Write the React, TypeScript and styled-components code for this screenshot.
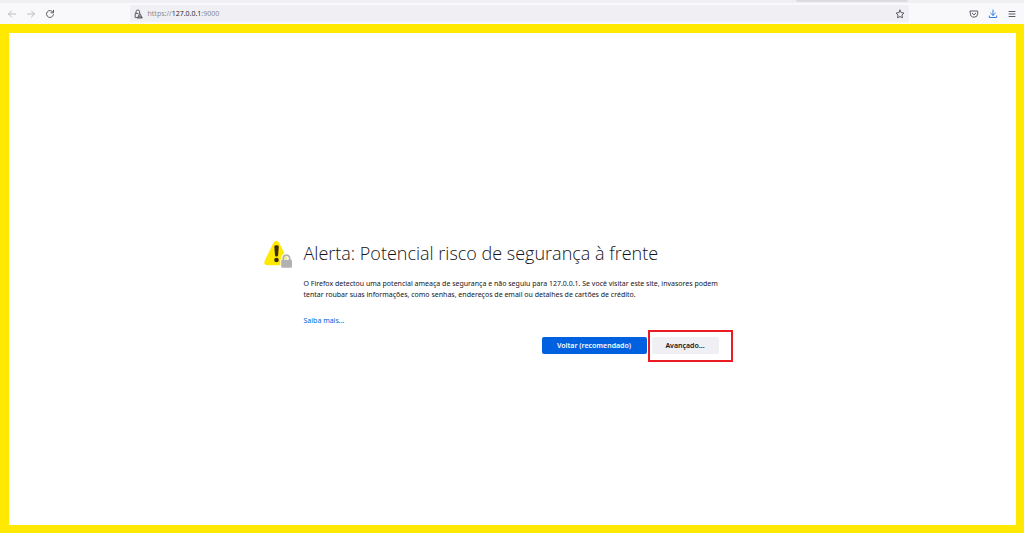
import React from "react";
import styled, { createGlobalStyle } from "styled-components";

const GlobalStyle = createGlobalStyle`
  * { box-sizing: border-box; }
  body { margin: 0; background: #fff; font-family: "Noto Sans", "Open Sans", sans-serif; }
`;

const Browser = styled.div`
  display: flex;
  flex-direction: column;
  min-height: 100vh;
`;

const TabStrip = styled.div`
  display: flex;
  justify-content: flex-end;
  height: 3px;
  padding-right: 116px;
  background: #f0f0f3;
`;

const TabEdge = styled.div`
  width: 112px;
  height: 2px;
  border-radius: 0 0 2px 2px;
  background: #dcdce0;
`;

const Toolbar = styled.nav`
  display: flex;
  align-items: center;
  justify-content: space-between;
  height: 21px;
  padding: 0 7px;
  background: #f9f9fb;
`;

const ToolGroup = styled.div<{ $gap: number }>`
  display: flex;
  gap: ${(p) => p.$gap}px;
`;

const ToolButton = styled.button<{ $color?: string }>`
  display: flex;
  padding: 0;
  border: 0;
  background: none;
  color: ${(p) => p.$color ?? "#5b5b66"};
`;

const AddressBar = styled.div`
  display: flex;
  flex: 0 1 779px;
  align-items: center;
  gap: 5px;
  height: 17px;
  margin-left: 14px;
  padding: 0 4px 0 3px;
  border-radius: 2px;
  background: #f0f0f4;
`;

const Address = styled.div`
  flex: 1;
  font-size: 7px;
  line-height: 12px;
  color: #8a8a92;
  outline: none;

  b { font-weight: 400; color: #2a2a33; }
`;

const Page = styled.main`
  display: flex;
  flex: 1;
  align-items: center;
  justify-content: center;
  padding-bottom: 0;
  border: solid #ffe900;
  border-width: 9px 8px 8px 9px;
`;

const Warning = styled.section`
  display: grid;
  grid-template-columns: 40px minmax(0, 418px) 40px;
  padding-top: 36px;
`;

const Content = styled.div`
  display: flex;
  flex-direction: column;
`;

const Title = styled.h1`
  margin: 0 0 12px;
  font: 300 18px/26px "Open Sans", "Noto Sans", sans-serif;
  color: #15141a;
  white-space: nowrap;
`;

const Message = styled.p`
  margin: 0 0 15px;
  font-size: 7px;
  line-height: 11px;
  color: #15141a;
`;

const LearnMore = styled.a`
  align-self: flex-start;
  font-size: 7px;
  line-height: 12px;
  color: #0061e0;
  text-decoration: none;
`;

const Actions = styled.div`
  display: flex;
  justify-content: flex-end;
  gap: 5px;
  margin-top: 10px;
  padding-right: 3px;
`;

const Button = styled.button<{ $primary?: boolean }>`
  width: ${(p) => (p.$primary ? 105 : 67)}px;
  height: 17px;
  padding: 0;
  border: 0;
  border-radius: 2px;
  font: 600 7px/17px "Noto Sans", sans-serif;
  background: ${(p) => (p.$primary ? "#0061e0" : "#f0f0f4")};
  color: ${(p) => (p.$primary ? "#fbfbfe" : "#15141a")};
`;

const Highlight = styled.div`
  position: relative;
  display: flex;

  &::after {
    content: "";
    position: absolute;
    inset: -7px -14px -8px -4px;
    border: 2px solid #ec1c24;
    pointer-events: none;
  }
`;

const Stroke = ({ children, size = 10 }: { children: React.ReactNode; size?: number }) => (
  <svg width={size} height={size} viewBox="0 0 10 10" fill="none" stroke="currentColor" strokeWidth="1" strokeLinecap="round" strokeLinejoin="round" aria-hidden="true">
    {children}
  </svg>
);

const AlertIcon = () => (
  <svg width="29" height="29" viewBox="0 0 29 29" aria-hidden="true">
    <path d="M9.6 2.6Q12.4-1.2 15 2.6L24 20.5Q25.5 25.3 21.5 25.3H3.4Q-.9 25.3.8 20.5Z" fill="#ffe900" />
    <path d="M10.3 6.6Q10.3 5.2 12.5 5.2T14.8 6.6L14.1 15.2Q14 16.5 12.5 16.5T11 15.2Z" fill="#3e2b0a" />
    <circle cx="12.5" cy="20" r="2.3" fill="#3e2b0a" />
    <path d="M18.8 20V18.3a3.7 3.7 0 0 1 7.4 0V20" fill="none" stroke="#fff" strokeWidth="3.4" />
    <rect x="16.4" y="18.8" width="12.2" height="9.6" rx="1.5" fill="#fff" />
    <path d="M19.3 20.5V18.3a3.2 3.2 0 0 1 6.4 0v2.2" fill="none" stroke="#b1b1b3" strokeWidth="1.8" />
    <rect x="17.2" y="19.8" width="10.8" height="7.9" rx="1" fill="#b1b1b3" />
  </svg>
);

export default function App() {
  return (
    <Browser>
      <GlobalStyle />
      <TabStrip><TabEdge /></TabStrip>
      <Toolbar aria-label="Navegação">
        <ToolGroup $gap={9}>
          <ToolButton aria-label="Voltar" $color="#bcbcc2"><Stroke><path d="M8.5 5H1.5M4.5 2 1.5 5l3 3" /></Stroke></ToolButton>
          <ToolButton aria-label="Avançar" $color="#bcbcc2"><Stroke><path d="M1.5 5h7M5.5 2l3 3-3 3" /></Stroke></ToolButton>
          <ToolButton aria-label="Recarregar"><Stroke><path d="M8 3.1A3.5 3.5 0 1 0 8.5 5.6M8.5 1.3V3.8H6" /></Stroke></ToolButton>
        </ToolGroup>
        <AddressBar>
          <ToolButton aria-label="Informações do site">
            <Stroke>
              <path d="M3 4.3V2.8a1.8 1.8 0 0 1 3.6 0V4M3.7 8.6H2.2V4.4H5" />
              <path d="M7 4.8 9.3 9H4.7Z" fill="currentColor" />
              <path d="M7 6.3v1.1M7 8.3v.1" stroke="#f0f0f4" strokeWidth=".6" />
            </Stroke>
          </ToolButton>
          <Address>https://<b>127.0.0.1</b>:9000</Address>
          <ToolButton aria-label="Favoritar"><Stroke><path d="m5 1.1 1.2 2.5 2.7.4L7 6l.4 2.8L5 7.5 2.6 8.8 3 6 1.1 4l2.7-.4Z" /></Stroke></ToolButton>
        </AddressBar>
        <ToolGroup $gap={9}>
          <ToolButton aria-label="Pocket"><Stroke><path d="M1.3 2h7.4v2.5a3.7 3.7 0 0 1-7.4 0ZM3.3 4.3 5 5.9l1.7-1.6" /></Stroke></ToolButton>
          <ToolButton aria-label="Downloads" $color="#2b7de9"><Stroke><path d="M5 1v5.2M2.7 4.2 5 6.4l2.3-2.2M1.3 7v1.5h7.4V7" /></Stroke></ToolButton>
          <ToolButton aria-label="Menu"><Stroke><path d="M2 2.5h6M2 5h6M2 7.5h6" /></Stroke></ToolButton>
        </ToolGroup>
      </Toolbar>
      <Page>
        <Warning>
          <AlertIcon />
          <Content>
            <Title>Alerta: Potencial risco de segurança à frente</Title>
            <Message>
              O Firefox detectou uma potencial ameaça de segurança e não seguiu para 127.0.0.1. Se você visitar este site, invasores podem tentar roubar suas informações, como senhas, endereços de email ou detalhes de cartões de crédito.
            </Message>
            <LearnMore href="#">Saiba mais...</LearnMore>
            <Actions>
              <Button $primary>Voltar (recomendado)</Button>
              <Highlight><Button>Avançado...</Button></Highlight>
            </Actions>
          </Content>
        </Warning>
      </Page>
    </Browser>
  );
}
